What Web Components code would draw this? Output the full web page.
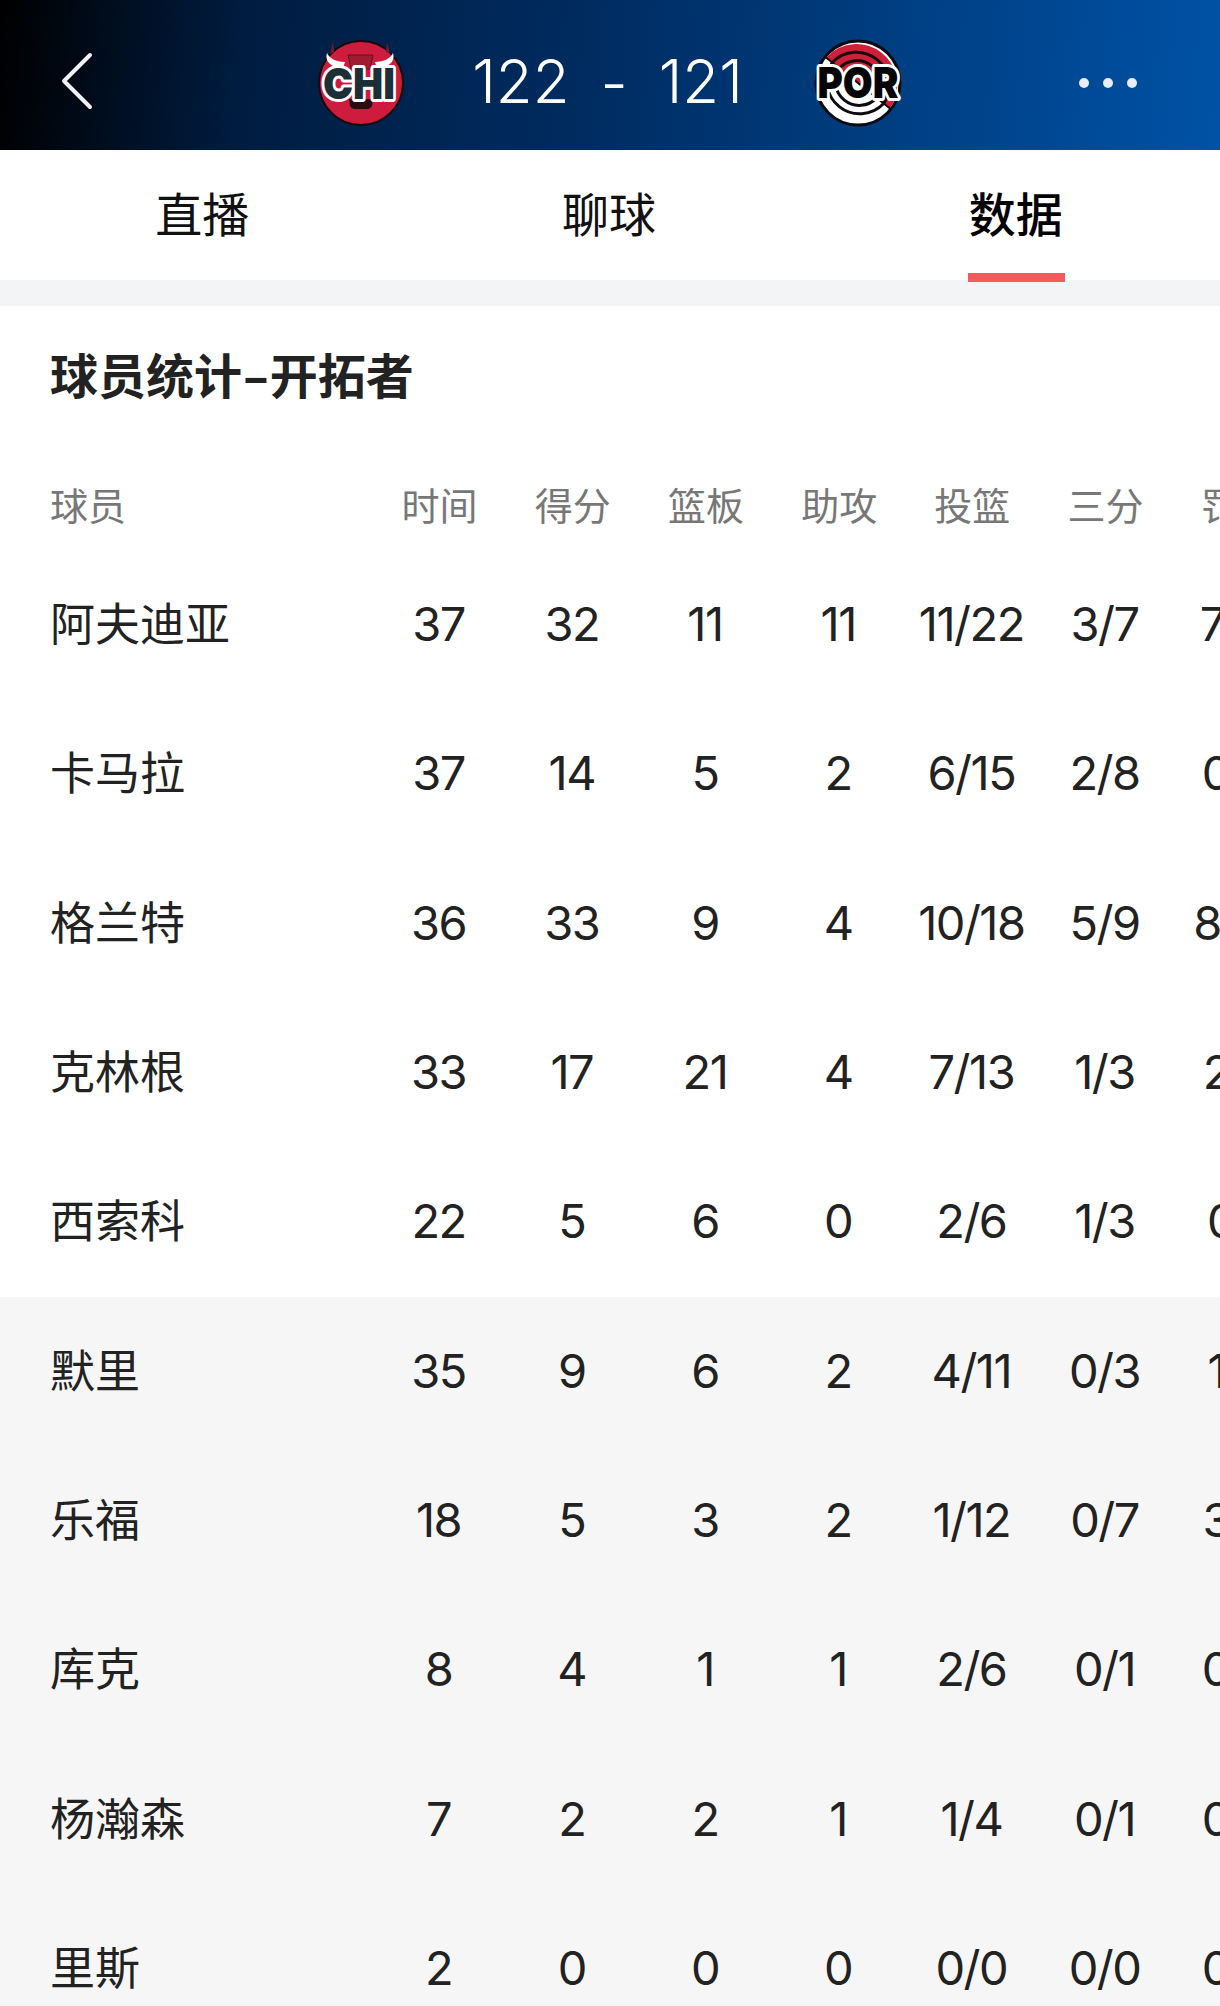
<!DOCTYPE html>
<html lang="zh">
<head>
<meta charset="utf-8">
<title>球员统计</title>
<style>
  html, body { margin: 0; height: 2006px; overflow: hidden; background: #fff; }
  body { font-family: Inter, "Noto Sans CJK SC", sans-serif; }
</style>
</head>
<body>
<game-header home="122" away="121"></game-header>
<game-tabs></game-tabs>
<stat-table title="球员统计-开拓者">
  <stat-row name="阿夫迪亚" values="37,32,11,11,11/22,3/7,7/11"></stat-row>
  <stat-row name="卡马拉" values="37,14,5,2,6/15,2/8,0/0"></stat-row>
  <stat-row name="格兰特" values="36,33,9,4,10/18,5/9,8/10"></stat-row>
  <stat-row name="克林根" values="33,17,21,4,7/13,1/3,2/2"></stat-row>
  <stat-row name="西索科" values="22,5,6,0,2/6,1/3,0/1"></stat-row>
  <stat-row bench name="默里" values="35,9,6,2,4/11,0/3,1/2"></stat-row>
  <stat-row bench name="乐福" values="18,5,3,2,1/12,0/7,3/3"></stat-row>
  <stat-row bench name="库克" values="8,4,1,1,2/6,0/1,0/0"></stat-row>
  <stat-row bench name="杨瀚森" values="7,2,2,1,1/4,0/1,0/0"></stat-row>
  <stat-row bench name="里斯" values="2,0,0,0,0/0,0/0,0/0"></stat-row>
</stat-table>

<script>
class TeamLogo extends HTMLElement {
  connectedCallback() {
    this.attachShadow({ mode: 'open' });
    const team = this.getAttribute('team');
    const art = team === 'CHI' ? `
      <circle cx="44" cy="44" r="42" fill="#ce1c3e" stroke="#140a0c" stroke-width="2"/>
      <path d="M31 16h25l-3 14H34z" fill="#a01a30" stroke="#5a1420" stroke-width="1"/>
      <path d="M32 60h24l-1 7c-1 2-3 3-5 3H38c-2 0-4-1-5-3z" fill="#2a0d10"/>
      <path d="M10 14c2 5 9 9 18 9l-2 6C17 29 7 24 10 14z" fill="#fff"/>
      <path d="M76 14c-2 5-9 9-18 9l2 6C69 29 79 24 76 14z" fill="#fff"/>
      <path d="M16 3l1 10-4 2zM70 3l-1 10 4 2z" fill="#7a1a2a"/>
    ` : `
      <circle cx="44" cy="44" r="42" fill="#fff" stroke="#0c0c10" stroke-width="3"/>
      <path d="M12 18.5A41 41 0 0 1 76 69.5z" fill="#cf1f3a"/>
      <path d="M18.3 23.5A33 33 0 0 1 69.7 64.5M25.3 29.1A24 24 0 0 1 62.7 58.9" fill="none" stroke="#140a0c" stroke-width="3"/>
      <path d="M18.3 23.5A33 33 0 0 0 69.7 64.5M25.3 29.1A24 24 0 0 0 62.7 58.9" fill="none" stroke="#0c0c10" stroke-width="3"/>
      <path d="M12 18.5L76 69.5" stroke="#0c0c10" stroke-width="2"/>
    `;
    this.shadowRoot.innerHTML = `
      <style>
        :host { display: block; width: 88px; height: 88px; margin-top: 4px; }
        svg { display: block; overflow: visible; }
        text {
          font-family: Inter, sans-serif;
          font-weight: 900;
          font-size: 43px;
          text-anchor: middle;
          paint-order: stroke;
          stroke: #fff;
          stroke-width: 6px;
          stroke-linejoin: round;
        }
      </style>
      <svg width="88" height="88" viewBox="0 0 88 88">
        ${art}
        <text x="${team === 'CHI' ? 42 : 44}" y="${team === 'CHI' ? 60 : 59}" fill="${team === 'CHI' ? '#1c2f36' : '#050505'}" textLength="${team === 'CHI' ? 72 : 81}" lengthAdjust="spacingAndGlyphs">${team}</text>
      </svg>
    `;
  }
}
customElements.define('team-logo', TeamLogo);

class GameHeader extends HTMLElement {
  connectedCallback() {
    this.attachShadow({ mode: 'open' });
    this.shadowRoot.innerHTML = `
      <style>
        :host {
          display: grid;
          grid-template-columns: 1fr auto 1fr;
          align-items: center;
          height: 138px;
          padding: 12px 83px 0 60px;
          background: linear-gradient(95deg, #000000 0%, #001c40 20%, #002d63 50%, #0052a6 100%);
          color: #fff;
        }
        .back { display: block; }
        .center { display: flex; align-items: center; transform: translateX(11px); }
        .score {
          width: 409px;
          display: flex;
          justify-content: center;
          gap: 31px;
          font: 300 60px/1 Inter, sans-serif;
          box-sizing: border-box;
          transform: translateX(-2px);
        }
        .dash { position: relative; top: 2px; }
        .dots { display: flex; gap: 14px; justify-content: flex-end; margin-top: 4px; }
        .dots i { width: 10px; height: 10px; border-radius: 50%; background: #e8effa; }
      </style>
      <svg class="back" width="34" height="58" viewBox="0 0 34 58">
        <path d="M30 3L4 29l26 26" fill="none" stroke="#f1f1f1" stroke-width="4" stroke-linecap="round" stroke-linejoin="round"/>
      </svg>
      <div class="center">
        <team-logo team="CHI"></team-logo>
        <div class="score"><span>${this.getAttribute('home')}</span><span class="dash">-</span><span>${this.getAttribute('away')}</span></div>
        <team-logo team="POR"></team-logo>
      </div>
      <div class="dots"><i></i><i></i><i></i></div>
    `;
  }
}
customElements.define('game-header', GameHeader);

class GameTabs extends HTMLElement {
  connectedCallback() {
    this.attachShadow({ mode: 'open' });
    this.shadowRoot.innerHTML = `
      <style>
        :host {
          display: grid;
          grid-template-columns: repeat(3, 1fr);
          height: 130px;
          background: #fff;
          border-bottom: 26px solid #f3f4f6;
          font: 400 47px/1 "Noto Sans CJK SC", sans-serif;
          color: #111;
        }
        .tab { position: relative; display: flex; justify-content: center; padding: 38px 2px 0 0; }
        .active { font-weight: 500; color: #000; }
        .active::after {
          content: "";
          position: absolute;
          left: 50%;
          bottom: -2px;
          width: 97px;
          height: 9px;
          margin-left: -49px;
          background: #f25a5e;
        }
      </style>
      <div class="tab">直播</div>
      <div class="tab">聊球</div>
      <div class="tab active">数据</div>
    `;
  }
}
customElements.define('game-tabs', GameTabs);

class StatRow extends HTMLElement {
  connectedCallback() {
    this.attachShadow({ mode: 'open' });
    const cells = this.getAttribute('values').split(',').map(v => `<div class="cell">${v}</div>`).join('');
    this.shadowRoot.innerHTML = `
      <style>
        :host {
          display: grid;
          grid-template-columns: 323px repeat(7, 133.2px);
          align-items: center;
          height: 149.33px;
          padding-left: 50px;
          background: #fff;
          color: #222;
        }
        :host([bench]) { background: #f6f6f6; }
        .name { font: 400 45px/1 "Noto Sans CJK SC", sans-serif; padding-bottom: 6px; }
        .cell { text-align: center; font: 400 47px/1 Inter, sans-serif; letter-spacing: -1.5px; white-space: nowrap; padding: 0 2px 2px 0; }
      </style>
      <div class="name">${this.getAttribute('name')}</div>
      ${cells}
    `;
  }
}
customElements.define('stat-row', StatRow);

class StatTable extends HTMLElement {
  connectedCallback() {
    this.attachShadow({ mode: 'open' });
    const heads = ['时间', '得分', '篮板', '助攻', '投篮', '三分', '罚球'].map(h => `<div>${h}</div>`).join('');
    const title = this.getAttribute('title').replace('-', '<span class="hy">-</span>');
    this.shadowRoot.innerHTML = `
      <style>
        :host { display: block; overflow: hidden; background: #fff; }
        h2 {
          margin: 0;
          box-sizing: border-box;
          padding: 41px 0 0 50px;
          height: 96px;
          font: 700 48px/52px "Noto Sans CJK SC", sans-serif;
          color: #222;
        }
        .hy { display: inline-block; padding: 0 5px; transform: scaleX(1.6); }
        .head {
          display: grid;
          box-sizing: border-box;
          grid-template-columns: 323px repeat(7, 133.2px);
          align-items: center;
          height: 148px;
          padding: 56px 0 0 50px;
          font: 400 38px/1 "Noto Sans CJK SC", sans-serif;
          color: #777;
          text-align: center;
        }
        .head div:first-child { text-align: left; }
      </style>
      <h2>${title}</h2>
      <div class="head"><div>球员</div>${heads}</div>
      <slot></slot>
    `;
  }
}
customElements.define('stat-table', StatTable);
</script>
</body>
</html>
